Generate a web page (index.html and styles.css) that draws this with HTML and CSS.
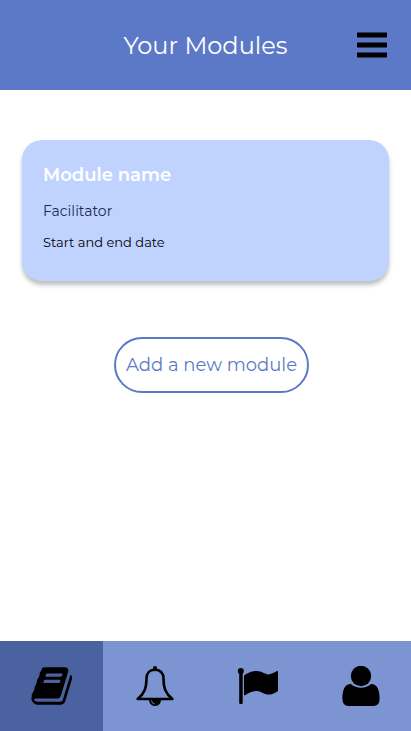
FILE: index.html
```html
<!DOCTYPE html>
<html lang="en">
<head>
<meta charset="utf-8">
<title>Your Modules</title>
<link rel="stylesheet" href="styles.css">
</head>
<body>
<header class="header">
  <h1 class="title">Your Modules</h1>
  <button class="menu" aria-label="Menu"><svg class="bars" viewBox="0 0 30 26"><path d="M.5 .5H29.500L30 1V5L29.500 5.500H.5L0 5V1ZM.5 10.500H29.500L30 11V15L29.500 15.500H.5L0 15V11ZM.5 20.500H29.500L30 21V25L29.500 25.500H.5L0 25V21Z"/></svg></button>
</header>
<main class="content">
  <article class="card">
    <h2 class="name">Module name</h2>
    <p class="facilitator">Facilitator</p>
    <p class="dates">Start and end date</p>
  </article>
  <button class="add">Add a new module</button>
</main>
<nav class="tabs">
  <a class="tab active" aria-label="Modules"><svg class="icon" viewBox="0 0 41 40"><path transform="translate(.4 -1.900) scale(.0245)" d="M1639 478q40 57 18 129l-275 906q-19 64-76.500 107.500t-122.500 43.500h-923q-77 0-148.500-53.500t-99.500-131.500q-24-67-2-127 0-4 3-27t4-37q1-8-3-21.500t-3-19.500q2-11 8-21t16.500-23.500 16.500-23.500q23-38 45-91.500t30-91.500q3-10 .5-30t-.5-28q3-11 17-28t17-23q21-36 42-92t25-90q1-9-2.500-32t.5-28q4-13 22-30.500t22-22.500q19-26 42.500-84.500t27.500-96.500q1-8-3-25.500t-2-26.500q2-8 9-18t18-23 17-21q8-12 16.500-30.500t15-35 16-36 19.500-32 26.500-23.500 36-11.500 47.500 5.500l-1 3q38-9 51-9h761q74 0 114 56t18 130l-274 906q-36 119-71.500 153.500t-128.500 34.500h-869q-27 0-38 15-11 16-1 43 24 70 144 70h923q29 0 56-15.500t35-41.500l300-987q7-22 5-57 38 15 59 43zm-1064 2q-4 13 2 22.500t20 9.500h608q13 0 25.500-9.500t16.500-22.500l21-64q4-13-2-22.500t-20-9.500h-608q-13 0-25.500 9.500t-16.500 22.500zm-83 256q-4 13 2 22.500t20 9.500h608q13 0 25.500-9.500t16.500-22.500l21-64q4-13-2-22.500t-20-9.500h-608q-13 0-25.500 9.500t-16.500 22.500z"/></svg></a>
  <a class="tab" aria-label="Notifications"><svg class="icon" viewBox="0 0 41 40"><path class="outline" d="M21 3.800C15.200 3.800 12.500 7.500 12.500 12.500C12.500 22 10.500 27.500 3.600 33H38.400C31.500 27.500 29.500 22 29.500 12.500C29.500 7.500 26.800 3.800 21 3.800Z"/><circle cx="21" cy="2" r="2"/><path d="M15 33.500H27Q27 40 21 40Q15 40 15 33.500Z"/><path class="glint" d="M17.500 34.500Q17.600 37.300 20.600 37.900"/></svg></a>
  <a class="tab" aria-label="Goals"><svg class="icon" viewBox="0 0 41 40"><circle cx="3.800" cy="5" r="3"/><path d="M2.200 5H5.700V37Q5.700 38 4.700 38H3.200Q2.200 38 2.200 37Z"/><path d="M7 10Q7 9.400 7.600 9C12 6.400 15.500 5 19.500 5C25 5 28 8.400 31 8.400C34 8.400 37 6.500 40 5Q41 4.600 41 5.700V24.300Q41 25 40.300 25.400C37.500 27 34.500 28.600 31.500 28.600C27 28.600 24 25 19.500 25C15 25 12 26.900 8.500 28.900Q7 29.700 7 28.300Z"/></svg></a>
  <a class="tab" aria-label="Profile"><svg class="icon" viewBox="0 0 41 40"><circle cx="21" cy="10" r="10.200"/><path d="M11 18Q15.200 21.800 21 21.800Q26.800 21.800 31 18C37.300 18 39.600 24 39.600 32.500Q39.600 40 33.500 40H8.500Q2.400 40 2.400 32.500C2.400 24 4.700 18 11 18Z"/></svg></a>
</nav>
</body>
</html>
```

FILE: styles.css
```css
* { box-sizing: border-box; }

body {
  margin: 0;
  height: 731px;
  display: flex;
  flex-direction: column;
  background: #fff;
  color: #000;
  font-family: Montserrat, Inter, sans-serif;
}

h1, h2, p { margin: 0; font-weight: 400; white-space: nowrap; }

button { font-family: inherit; padding: 0; border: 0; background: none; }

.header {
  height: 90px;
  display: grid;
  grid-template-columns: 123.500px 1fr 30px;
  align-items: center;
  padding-right: 24px;
  background: #5c79c7;
}

.title {
  grid-column: 2;
  color: #fff;
  font-size: 24px;
  line-height: 30px;
  padding-top: 2px;
}

.menu { display: flex; }
.bars { width: 30px; height: 26px; }

.content {
  flex: 1;
  display: flex;
  flex-direction: column;
  align-items: flex-start;
  padding: 50px 22px 0;
}

.card {
  width: 367px;
  height: 141px;
  padding: 23px 21px;
  border-radius: 20px;
  background: #c0d3ff;
  box-shadow: 0 4px 4px rgba(0, 0, 0, 0.25);
}

.name { color: #fff; font-size: 18px; font-weight: 600; line-height: 24px; }
.facilitator { margin-top: 14px; color: #1c2b50; font-size: 14px; line-height: 20px; }
.dates { margin-top: 11px; font-size: 13px; line-height: 20px; }

.add {
  width: 195px;
  height: 56px;
  margin: 56px 0 0 92px;
  padding: 0 0 1px 10px;
  border: 2px solid #5c79c7;
  border-radius: 28px;
  color: #5c79c7;
  font-size: 18px;
  text-align: left;
  white-space: nowrap;
}

.tabs {
  height: 90px;
  display: grid;
  grid-template-columns: 103px 103px 103px 102px;
  background: #7c94d2;
}

.tab { display: flex; align-items: center; padding-left: 31px; }
.active { background: #4a629f; }

.icon { width: 41px; height: 40px; }
.outline { fill: none; stroke: #000; stroke-width: 2.600px; stroke-linejoin: round; }
.glint { fill: none; stroke: #7c94d2; stroke-width: 0.900px; }
```
